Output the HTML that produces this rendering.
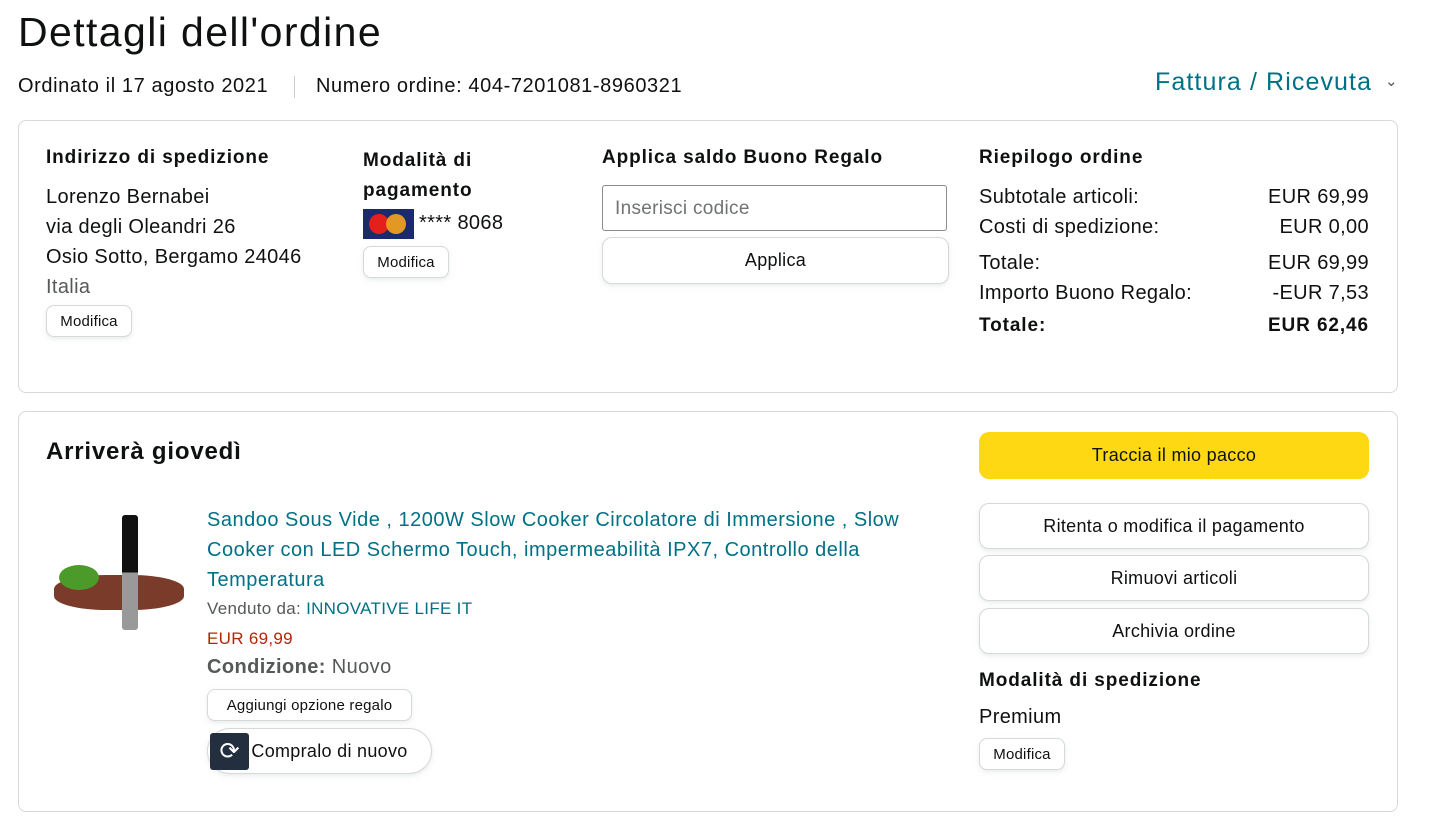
<!DOCTYPE html>
<html><head><meta charset="utf-8"><style>
*{box-sizing:border-box;margin:0;padding:0}
body{width:1452px;height:834px;background:#fff;font-family:"Liberation Sans",sans-serif;color:#0f1111;position:relative;overflow:hidden}
.a{position:absolute;white-space:nowrap}
.t{font-size:20px;letter-spacing:0.35px}
.b{font-weight:bold;font-size:19px;letter-spacing:0.9px}
.box{position:absolute;border:1px solid #d5d9d9;border-radius:8px}
.sb{position:absolute;border:1px solid #d5d9d9;border-radius:8px;background:#fff;box-shadow:0 2px 5px rgba(213,217,217,.5);font-size:15px;display:flex;align-items:center;justify-content:center;letter-spacing:0.2px}
.bb{position:absolute;border:1px solid #d5d9d9;border-radius:10px;background:#fff;box-shadow:0 2px 5px rgba(213,217,217,.5);font-size:18px;display:flex;align-items:center;justify-content:center;letter-spacing:0.3px}
.l{color:#007185}
</style></head><body>
<div class="a" style="left:18px;top:9px;font-size:41px;letter-spacing:1.4px">Dettagli dell'ordine</div>
<div class="a" style="left:18px;top:75px;font-size:20px;letter-spacing:0.6px">Ordinato il 17 agosto 2021</div>
<div class="a" style="left:294px;top:76px;width:1px;height:22px;background:#ccc"></div>
<div class="a" style="left:316px;top:75px;font-size:20px;letter-spacing:0.6px">Numero ordine: 404-7201081-8960321</div>
<div class="a l" style="left:1155px;top:68px;font-size:25px;letter-spacing:1.1px">Fattura / Ricevuta</div>
<div class="a" style="left:1385px;top:72px;font-size:15px;color:#555">&#8964;</div>

<div class="box" style="left:18px;top:120px;width:1380px;height:273px"></div>
<div class="a b" style="left:46px;top:147px">Indirizzo di spedizione</div>
<div class="a t" style="left:46px;top:182px;line-height:30px">Lorenzo Bernabei<br>via degli Oleandri 26<br>Osio Sotto, Bergamo 24046<br><span style="color:#565959">Italia</span></div>
<div class="sb" style="left:46px;top:305px;width:86px;height:32px">Modifica</div>

<div class="a b" style="left:363px;top:146px;line-height:30px">Modalità di<br>pagamento</div>
<div class="a" style="left:363px;top:209px;width:51px;height:30px;background:#1a2a6c">
<div class="a" style="left:6px;top:5px;width:20px;height:20px;border-radius:50%;background:#e4201c"></div>
<div class="a" style="left:23px;top:5px;width:20px;height:20px;border-radius:50%;background:#f8a51c;opacity:.9"></div></div>
<div class="a t" style="left:419px;top:212px">**** 8068</div>
<div class="sb" style="left:363px;top:246px;width:86px;height:32px">Modifica</div>

<div class="a b" style="left:602px;top:147px">Applica saldo Buono Regalo</div>
<div class="a" style="left:602px;top:185px;width:345px;height:46px;border:1px solid #888c8c;border-radius:3px;font-size:19px;color:#6f7373;padding:12px 12px;letter-spacing:0.3px">Inserisci codice</div>
<div class="bb" style="left:602px;top:237px;width:347px;height:47px">Applica</div>

<div class="a b" style="left:979px;top:147px">Riepilogo ordine</div>
<div class="a t" style="left:979px;top:182px;line-height:30px">Subtotale articoli:<br>Costi di spedizione:</div>
<div class="a t" style="right:83px;top:182px;line-height:30px;text-align:right">EUR 69,99<br>EUR 0,00</div>
<div class="a t" style="left:979px;top:248px;line-height:30px">Totale:<br>Importo Buono Regalo:</div>
<div class="a t" style="right:83px;top:248px;line-height:30px;text-align:right">EUR 69,99<br>-EUR 7,53</div>
<div class="a b" style="left:979px;top:315px">Totale:</div>
<div class="a b" style="right:83px;top:315px">EUR 62,46</div>

<div class="box" style="left:18px;top:411px;width:1380px;height:401px"></div>
<div class="a" style="left:46px;top:438px;font-size:24px;font-weight:bold;letter-spacing:0.8px">Arriverà giovedì</div>
<div class="a" style="left:54px;top:505px;width:133px;height:130px">
<div class="a" style="left:0;top:70px;width:130px;height:35px;border-radius:40%;background:#7a3b2a"></div>
<div class="a" style="left:5px;top:60px;width:40px;height:25px;border-radius:50%;background:#4c9a2a"></div>
<div class="a" style="left:68px;top:10px;width:16px;height:115px;background:linear-gradient(#111 50%,#999 50%);border-radius:3px"></div>
</div>
<div class="a l" style="left:207px;top:505px;font-size:20px;line-height:30px;white-space:normal;width:720px;letter-spacing:0.5px">Sandoo Sous Vide , 1200W Slow Cooker Circolatore di Immersione , Slow Cooker con LED Schermo Touch, impermeabilità IPX7, Controllo della Temperatura</div>
<div class="a" style="left:207px;top:599px;font-size:17px;color:#565959;letter-spacing:0.3px">Venduto da: <span class="l">INNOVATIVE LIFE IT</span></div>
<div class="a" style="left:207px;top:629px;font-size:17px;color:#b12704;letter-spacing:0.3px">EUR 69,99</div>
<div class="a" style="left:207px;top:656px;font-size:20px;color:#565959;letter-spacing:0.4px"><b>Condizione:</b> Nuovo</div>
<div class="sb" style="left:207px;top:689px;width:205px;height:32px">Aggiungi opzione regalo</div>
<div class="bb" style="left:207px;top:728px;width:225px;height:46px;border-radius:23px;padding-left:20px">Compralo di nuovo</div>
<div class="a" style="left:210px;top:733px;width:39px;height:37px;background:#232f3e;border-radius:3px;color:#fff;font-size:24px;text-align:center;line-height:37px">&#10227;</div>

<div class="a" style="left:979px;top:432px;width:390px;height:47px;background:#ffd814;border-radius:10px;font-size:18px;display:flex;align-items:center;justify-content:center;letter-spacing:0.3px">Traccia il mio pacco</div>
<div class="bb" style="left:979px;top:503px;width:390px;height:46px">Ritenta o modifica il pagamento</div>
<div class="bb" style="left:979px;top:555px;width:390px;height:46px">Rimuovi articoli</div>
<div class="bb" style="left:979px;top:608px;width:390px;height:46px">Archivia ordine</div>
<div class="a b" style="left:979px;top:670px">Modalità di spedizione</div>
<div class="a t" style="left:979px;top:706px">Premium</div>
<div class="sb" style="left:979px;top:738px;width:86px;height:32px">Modifica</div>
</body></html>
